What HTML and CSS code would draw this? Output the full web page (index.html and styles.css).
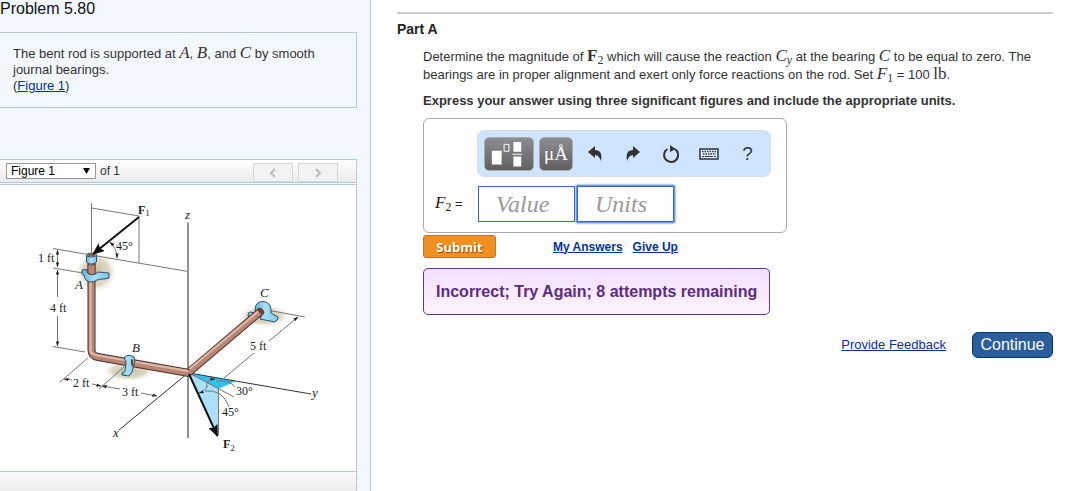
FILE: index.html
```html
<!DOCTYPE html>
<html lang="en">
<head>
<meta charset="utf-8">
<title>Problem 5.80</title>
<link rel="stylesheet" href="styles.css">
</head>
<body>
<div class="page">
  <aside class="sidebar">
    <h1 class="problem-title">Problem 5.80</h1>
    <section class="intro">
      <p>The bent rod is supported at <i class="math">A</i>, <i class="math">B</i>, and <i class="math">C</i> by smooth journal bearings.</p>
      <p>(<a href="#figure">Figure 1</a>)</p>
    </section>
    <div class="figure-bar">
      <span class="select-wrap">
        <select class="figure-select" id="figure-select" aria-label="Figure"><option>Figure 1</option></select>
        <svg class="select-arrow" viewBox="0 0 7 6" aria-hidden="true"><path d="M0 0h7L3.500 6z"/></svg>
      </span>
      <label class="figure-count" for="figure-select">of 1</label>
      <div class="figure-nav">
        <button class="nav-button" type="button" aria-label="Previous figure"><svg viewBox="0 0 8 10"><path d="M6 1L2 5l4 4"/></svg></button>
        <button class="nav-button" type="button" aria-label="Next figure"><svg viewBox="0 0 8 10"><path d="M2 1l4 4-4 4"/></svg></button>
      </div>
    </div>
    <div class="figure" id="figure">
      <svg class="diagram" viewBox="0 185 356 286" role="img" aria-label="Bent rod with bearings A, B and C">
        <defs>
          <radialGradient id="shade"><stop offset="0" stop-color="#c8c1a5"/><stop offset=".6" stop-color="#ddd9c7"/><stop offset="1" stop-color="#fff" stop-opacity="0"/></radialGradient>
          <linearGradient id="blue" x1="0" x2="1"><stop offset="0" stop-color="#60b5dc"/><stop offset=".45" stop-color="#a9e0f8"/><stop offset="1" stop-color="#7cc6ea"/></linearGradient>
          <marker id="tip" viewBox="0 0 6 6" refX="5.500" refY="3" markerWidth="5" markerHeight="5" orient="auto-start-reverse"><path d="M0 1L6 3L0 5z" fill="#222"/></marker>
          <marker id="force" viewBox="0 0 12 10" refX="11" refY="5" markerWidth="12" markerHeight="10" markerUnits="userSpaceOnUse" orient="auto"><path d="M0 0L12 5L0 10L2 5z" fill="#111"/></marker>
        </defs>
        <ellipse cx="96" cy="272" rx="22" ry="22" fill="url(#shade)"/>
        <ellipse cx="129" cy="371" rx="28" ry="11" fill="url(#shade)"/>
        <ellipse cx="264" cy="316" rx="28" ry="12" fill="url(#shade)"/>
        <g class="thin">
          <path d="M91.500 203V252M91.500 208L139 216V263M53 248.500L188 271.500M53 268L83 273M53 346.500L85 352"/>
          <path d="M88 358L60 382M124 367L99 389M256 308L305 317"/>
          <path d="M298 317L269 341M254 353L224 378"/>
          <path d="M57.500 250V267" marker-start="url(#tip)" marker-end="url(#tip)"/>
          <path d="M57.500 297V270" marker-end="url(#tip)"/><path d="M57.500 316V346" marker-end="url(#tip)"/>
          <path d="M72 380L64 379" marker-end="url(#tip)"/><path d="M92 384L101 386" marker-end="url(#tip)"/>
          <path d="M120 389L102 386" marker-end="url(#tip)"/><path d="M141 393L157 396" marker-end="url(#tip)"/>
          <path d="M293 321L298 317" marker-end="url(#tip)"/>
          <path d="M110 242Q117 249 117 258" marker-start="url(#tip)" marker-end="url(#tip)"/>
        </g>
        <path class="axis" d="M188 222.500V438"/>
        <path class="face-light" d="M189 373L218.500 389V435z"/>
        <path class="face-dark" d="M189 373L236 381L218.500 389z"/>
        <g class="thin">
          <path d="M218.500 389V435M189 373L234 397"/>
          <path d="M207 387Q205 380 215 379" marker-end="url(#tip)"/>
          <path d="M207 386Q206 391 199 393" marker-end="url(#tip)"/>
          <path d="M216 381Q230 380 235 387M205 391Q223 389 229 407"/>
        </g>
        <path class="line" d="M188 373L119 430M189 373L311 394"/>
        <g class="bearing">
          <ellipse cx="251" cy="315" rx="3" ry="3"/>
          <path d="M255 310Q255 301 264 301.500Q272 303 271 313L278 317V319L275 322L260 319L262 314z"/>
        </g>
        <g class="rod">
          <path class="rod-edge" d="M188 373L261 311"/><path class="rod-fill" d="M188 373L261 311"/><path class="rod-shine" d="M187 371L260 310"/>
          <path class="rod-edge" d="M91.500 260V350Q91.500 356 98 357L189 373"/><path class="rod-fill" d="M91.500 260V350Q91.500 356 98 357L189 373"/><path class="rod-shine" d="M90.500 261V351Q91 354 98 355.500L188 371"/>
        </g>
        <ellipse cx="261" cy="311" rx="2.500" ry="4" fill="#703f2e" transform="rotate(-40 261 311)"/>
        <g class="bearing">
          <path d="M82 270L87 269.500Q86 274 91 274.500Q96 275 98 272L109 273V278L104 279Q99 279 97 280Q91 284 86 280Q84 277 84 275L82 274z"/>
          <path d="M86.500 255V262Q91 266 96.500 262V255z"/><ellipse cx="91.500" cy="255" rx="5" ry="2"/>
          <path d="M124 358Q127 353 134 357L135 361L132 372L129 376L122 375Q121 372 125 371L126 362z"/>
        </g>
        <ellipse cx="91.500" cy="255" rx="3.500" ry="1.500" fill="#8b5b4b"/>
        <path d="M88 264.500Q91 266 95 264.500V274Q91 276 88 273z" fill="#b98774" stroke="#4b302b" stroke-width=".7"/>
        <path d="M132.500 359.500Q131 363 133 366" fill="none" stroke="#703f2e" stroke-width="2"/>
        <path class="force" d="M139 217L93 254" marker-end="url(#force)"/>
        <path class="force" d="M189 374L217.500 436" marker-end="url(#force)"/>
        <g class="labels">
          <text x="138" y="214"><tspan class="vector">F</tspan><tspan class="index" dy="2">1</tspan></text>
          <text x="116" y="250">45°</text><text x="38" y="262">1 ft</text><text x="50" y="312">4 ft</text>
          <text x="73" y="387">2 ft</text><text x="122" y="396">3 ft</text><text x="250" y="350">5 ft</text>
          <text x="236" y="395">30°</text><text x="222" y="416">45°</text>
          <text x="223" y="448"><tspan class="vector">F</tspan><tspan class="index" dy="3">2</tspan></text>
          <g class="names"><text x="75" y="289">A</text><text x="132" y="352">B</text><text x="260" y="297">C</text><text x="185" y="219">z</text><text x="113" y="437">x</text><text x="312" y="397">y</text></g>
        </g>
      </svg>
    </div>
    <div class="figure-foot"></div>
  </aside>

  <main class="content">
    <h2 class="part-title">Part A</h2>
    <div class="part">
      <p class="question">Determine the magnitude of <b class="math">F</b><sub>2</sub> which will cause the reaction <i class="math">C</i><sub><i>y</i></sub> at the bearing <i class="math">C</i> to be equal to zero. The bearings are in proper alignment and exert only force reactions on the rod. Set <i class="math">F</i><sub>1</sub> = 100 <span class="math">lb</span>.</p>
      <p class="instruction">Express your answer using three significant figures and include the appropriate units.</p>
      <form class="answer">
        <div class="toolbar">
          <button class="tool-dark tool-template" type="button" aria-label="Templates"><svg viewBox="0 0 49 33"><path fill="#fff" d="M7 13h10v14H7zM29 4h8v10h-8zM29 19h8v10h-8zM28 16h10v1H28z"/><path fill="none" stroke="#fff" d="M19.500 6.500h5v7h-5z"/></svg></button>
          <button class="tool-dark tool-units" type="button">μÅ</button>
          <button class="tool" type="button" aria-label="Undo"><svg viewBox="0 0 16 18"><path d="M1 7L8 1V5Q16 5 14 16Q12 10 8 10V13z"/></svg></button>
          <button class="tool" type="button" aria-label="Redo"><svg viewBox="0 0 16 18"><path d="M15 7L8 1V5Q0 5 2 16Q4 10 8 10V13z"/></svg></button>
          <button class="tool" type="button" aria-label="Reset"><svg viewBox="0 0 16 18"><path d="M4.500 4A7 7 0 1 0 12 4.200" fill="none" stroke="#333" stroke-width="2"/><path d="M7 0L12.500 4L7 7z"/></svg></button>
          <button class="tool" type="button" aria-label="Keyboard"><svg class="keyboard" viewBox="0 0 20 12"><path d="M1 1H19V11H1z" fill="#e9f2fc" stroke="#273340" stroke-width="1.500"/><path d="M3 3.500H17M4 6H17" stroke="#273340" stroke-width="1.500" stroke-dasharray="1.500 1"/><path d="M3 8.500H5M6 8.500H14M15 8.500H17" stroke="#273340"/></svg></button>
          <button class="tool tool-help" type="button" aria-label="Help">?</button>
        </div>
        <label class="answer-label" for="value"><i class="math">F</i><sub>2</sub> =</label>
        <div class="fields">
          <input class="field" id="value" type="text" placeholder="Value">
          <input class="field field-active" type="text" placeholder="Units" aria-label="Units">
        </div>
      </form>
      <div class="actions">
        <button class="submit" type="button">Submit</button>
        <a href="#answers">My Answers</a>
        <a href="#give-up">Give Up</a>
      </div>
      <div class="result" role="status">Incorrect; Try Again; 8 attempts remaining</div>
    </div>
    <footer class="foot">
      <a href="#feedback">Provide Feedback</a>
      <button class="continue" type="button">Continue</button>
    </footer>
  </main>
</div>
</body>
</html>
```

FILE: styles.css
```css
* { box-sizing: border-box; }
body { margin: 0; background: #fff; color: #333; font: 13px/16px "Liberation Sans", Arial, sans-serif; }
h1, h2, p { margin: 0; }
a { color: #039; }
button, input, select { font-family: inherit; margin: 0; }
button { padding: 0; }
.page { display: grid; grid-template-columns: minmax(0, 371fr) minmax(0, 699fr); min-height: 100vh; }

.sidebar { display: flex; flex-direction: column; padding-right: 13px; background: #f3f8ff; border-right: 1px solid #b5c9de; }
.problem-title { padding: 1px 0 15px; color: #111; font-size: 16px; font-weight: normal; line-height: 16px; }
.intro { min-height: 76px; padding: 13px 30px 13px 13px; border: 1px solid #b5c9de; border-left: 0; }
.math { font-family: "Liberation Serif", serif; font-size: 17px; line-height: 1px; }
sub { font: 12px/1px "Liberation Serif", serif; vertical-align: -3px; }

.figure-bar { display: flex; align-items: center; gap: 4px; height: 24px; margin: 51px 0 1px; padding: 0 18px 0 6px; border: 1px solid #b5c9de; border-left: 0; background: linear-gradient(#fff, #ebebeb); }
.select-wrap { position: relative; display: flex; }
.figure-select { appearance: none; width: 90px; height: 16px; padding: 0 4px; border: 1px solid #999; border-radius: 0; background: #fff; color: #000; font-size: 12px; line-height: 14px; }
.select-arrow { position: absolute; top: 5px; right: 6px; width: 7px; height: 6px; pointer-events: none; }
.figure-count { font-size: 12px; }
.figure-nav { display: flex; gap: 5px; margin-left: auto; align-self: flex-end; }
.nav-button { display: grid; place-items: center; width: 40px; height: 19px; border: 1px solid #d5d5d5; background: #f3f3f3; }
.nav-button svg { width: 8px; height: 10px; fill: none; stroke: #bbb; stroke-width: 2; }
.figure { border: 1px solid #b5c9de; border-left: 0; background: #fff; }
.diagram { display: block; width: 100%; }
.figure-foot { flex: 1; min-height: 19px; border-right: 1px solid #b5c9de; background: linear-gradient(#fafafa, #ededed); }

.thin { fill: none; stroke: #777; stroke-width: 1; }
.line { fill: none; stroke: #333; stroke-width: 1; }
.axis { fill: none; stroke: #929292; stroke-width: 2; }
.face-light { fill: #ace0fa; }
.face-dark { fill: #31c1f0; }
.rod { fill: none; stroke-linejoin: round; }
.rod-edge { stroke: #4b302b; stroke-width: 8; }
.rod-fill { stroke: #b98673; stroke-width: 6; }
.rod-shine { stroke: #ddb9a7; stroke-width: 2; }
.bearing { fill: url(#blue); stroke: #315264; stroke-width: 1; stroke-linejoin: round; }
.force { fill: none; stroke: #111; stroke-width: 2; }
.labels { fill: #222; font: 12px "Liberation Serif", serif; }
.vector { font-weight: bold; }
.index { font-size: 9px; }
.names { font-style: italic; font-size: 13px; }

.content { padding: 12px 17px 12px 26px; }
.part-title { padding-top: 7px; border-top: 2px solid #ccc; color: #222; font-size: 14px; line-height: 16px; }
.part { padding: 11px 0 0 26px; }
.question { line-height: 18px; }
.instruction { padding: 8px 0; font-weight: bold; line-height: 18px; }
.answer { display: grid; grid-template-columns: 41px minmax(0, 294px); column-gap: 1px; row-gap: 9px; width: 100%; max-width: 364px; padding: 11px 12px 10px 11px; border: 1px solid #aaa; border-radius: 6px; }
.toolbar { grid-column: 2; display: flex; align-items: center; gap: 5px; height: 47px; padding: 0 6px; border: 1px solid #ddd; border-radius: 7px; background: #cfe5ff; }
.tool-dark { height: 34px; border: 1px solid #aaa; border-radius: 5px; background: linear-gradient(#8d8c94, #606060); color: #fff; }
.tool-template { width: 50px; }
.tool-template svg { display: block; width: 100%; }
.tool-units { width: 34px; font: 19px/30px "Liberation Serif", serif; }
.tool { display: grid; place-items: center; flex: 1; height: 34px; border: 0; background: none; color: #333; }
.tool svg { width: 16px; height: 18px; fill: #333; }
.tool .keyboard { width: 20px; height: 12px; }
.tool-help { font-size: 19px; }
.answer-label { align-self: center; color: #222; white-space: nowrap; }
.fields { display: flex; gap: 2px; padding-left: 1px; }
.field { width: 97px; min-width: 0; height: 36px; padding: 0 17px; border: 1px solid #36c; border-radius: 0; background: #fff; font: italic 24px "Liberation Serif", serif; }
.field::placeholder { color: #999; opacity: 1; }
.field-active { box-shadow: 0 0 2px 1px #36c; }

.actions { display: flex; align-items: center; gap: 10px; padding: 2px 0 10px; font-size: 12px; font-weight: bold; }
.submit { width: 73px; height: 23px; margin-right: 47px; border: 1px solid #c87430; border-radius: 3px; background: #f09020; color: #fff; font: bold 13px "Open Sans", sans-serif; text-shadow: 1px 1px 1px #964b00; }
.result { width: fit-content; padding: 14px 12px; border: 1px solid #639; border-radius: 5px; background: linear-gradient(#f3dfff, #fdf3ff); color: #5b2d7d; font-size: 16px; font-weight: bold; line-height: 17px; }
.foot { display: flex; justify-content: flex-end; align-items: center; gap: 26px; padding-top: 17px; }
.continue { width: 81px; height: 26px; border: 1px solid #036; border-radius: 6px; background: #2b5c9c; color: #fff; font-size: 16px; }
```
